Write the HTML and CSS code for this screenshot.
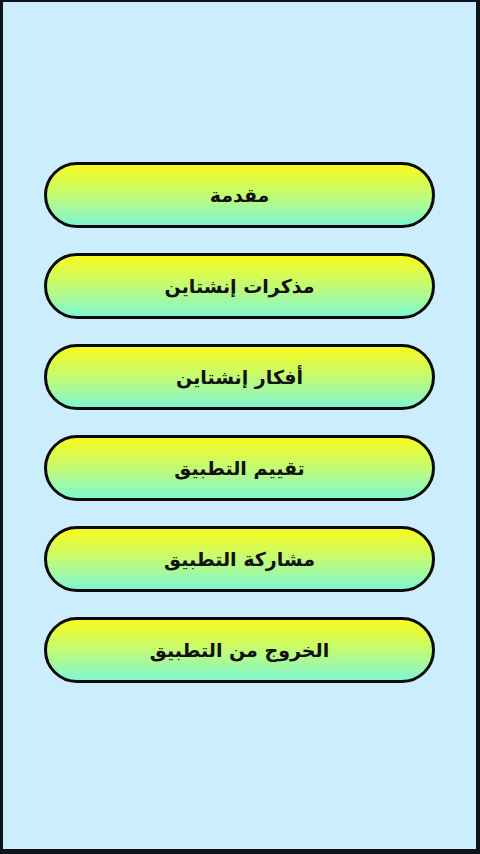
FILE: index.html
```html
<html>
  <head>
    <meta charset="UTF-8">
    <meta name="viewport" content="width=device-width, initial-scale=1">
    <title>أينشتاين</title>
    <link rel="stylesheet" href="styles.css">
  </head>

  <body>
    <div class="menu-screen">
      <div class="menu-list" dir="rtl">
        <div class="menu-button">مقدمة</div>
        <div class="menu-button">مذكرات إنشتاين</div>
        <div class="menu-button">أفكار إنشتاين</div>
        <div class="menu-button">تقييم التطبيق</div>
        <div class="menu-button">مشاركة التطبيق</div>
        <div class="menu-button">الخروج من التطبيق</div>
      </div>
    </div>
  </body>
</html>
```

FILE: styles.css
```css
html, body {
  width: 100%;
  height: 100%;
}

body {
  margin: 0;
  background-color: #0b1418;
  font-family: "DejaVu Sans", sans-serif;
}

.menu-screen {
  box-sizing: border-box;
  height: 100%;
  margin: 0 4px 0 3px;
  border-top: 2px solid #0b1418;
  border-bottom: 5px solid #0b1418;
  background-color: #cbedfc;
  padding-top: 160px;
}

.menu-list {
  display: flex;
  flex-direction: column;
  gap: 25px;
  margin: 0 41px;
}

.menu-button {
  height: 60px;
  border: 3px solid #0a0a0a;
  border-radius: 33px;
  background: linear-gradient(to bottom, #f7fa1e 0%, #c9fb6a 45%, #7ff7d2 100%);
  display: flex;
  align-items: center;
  justify-content: center;
  font-size: 19px;
  font-weight: bold;
  color: #111;
}
```
